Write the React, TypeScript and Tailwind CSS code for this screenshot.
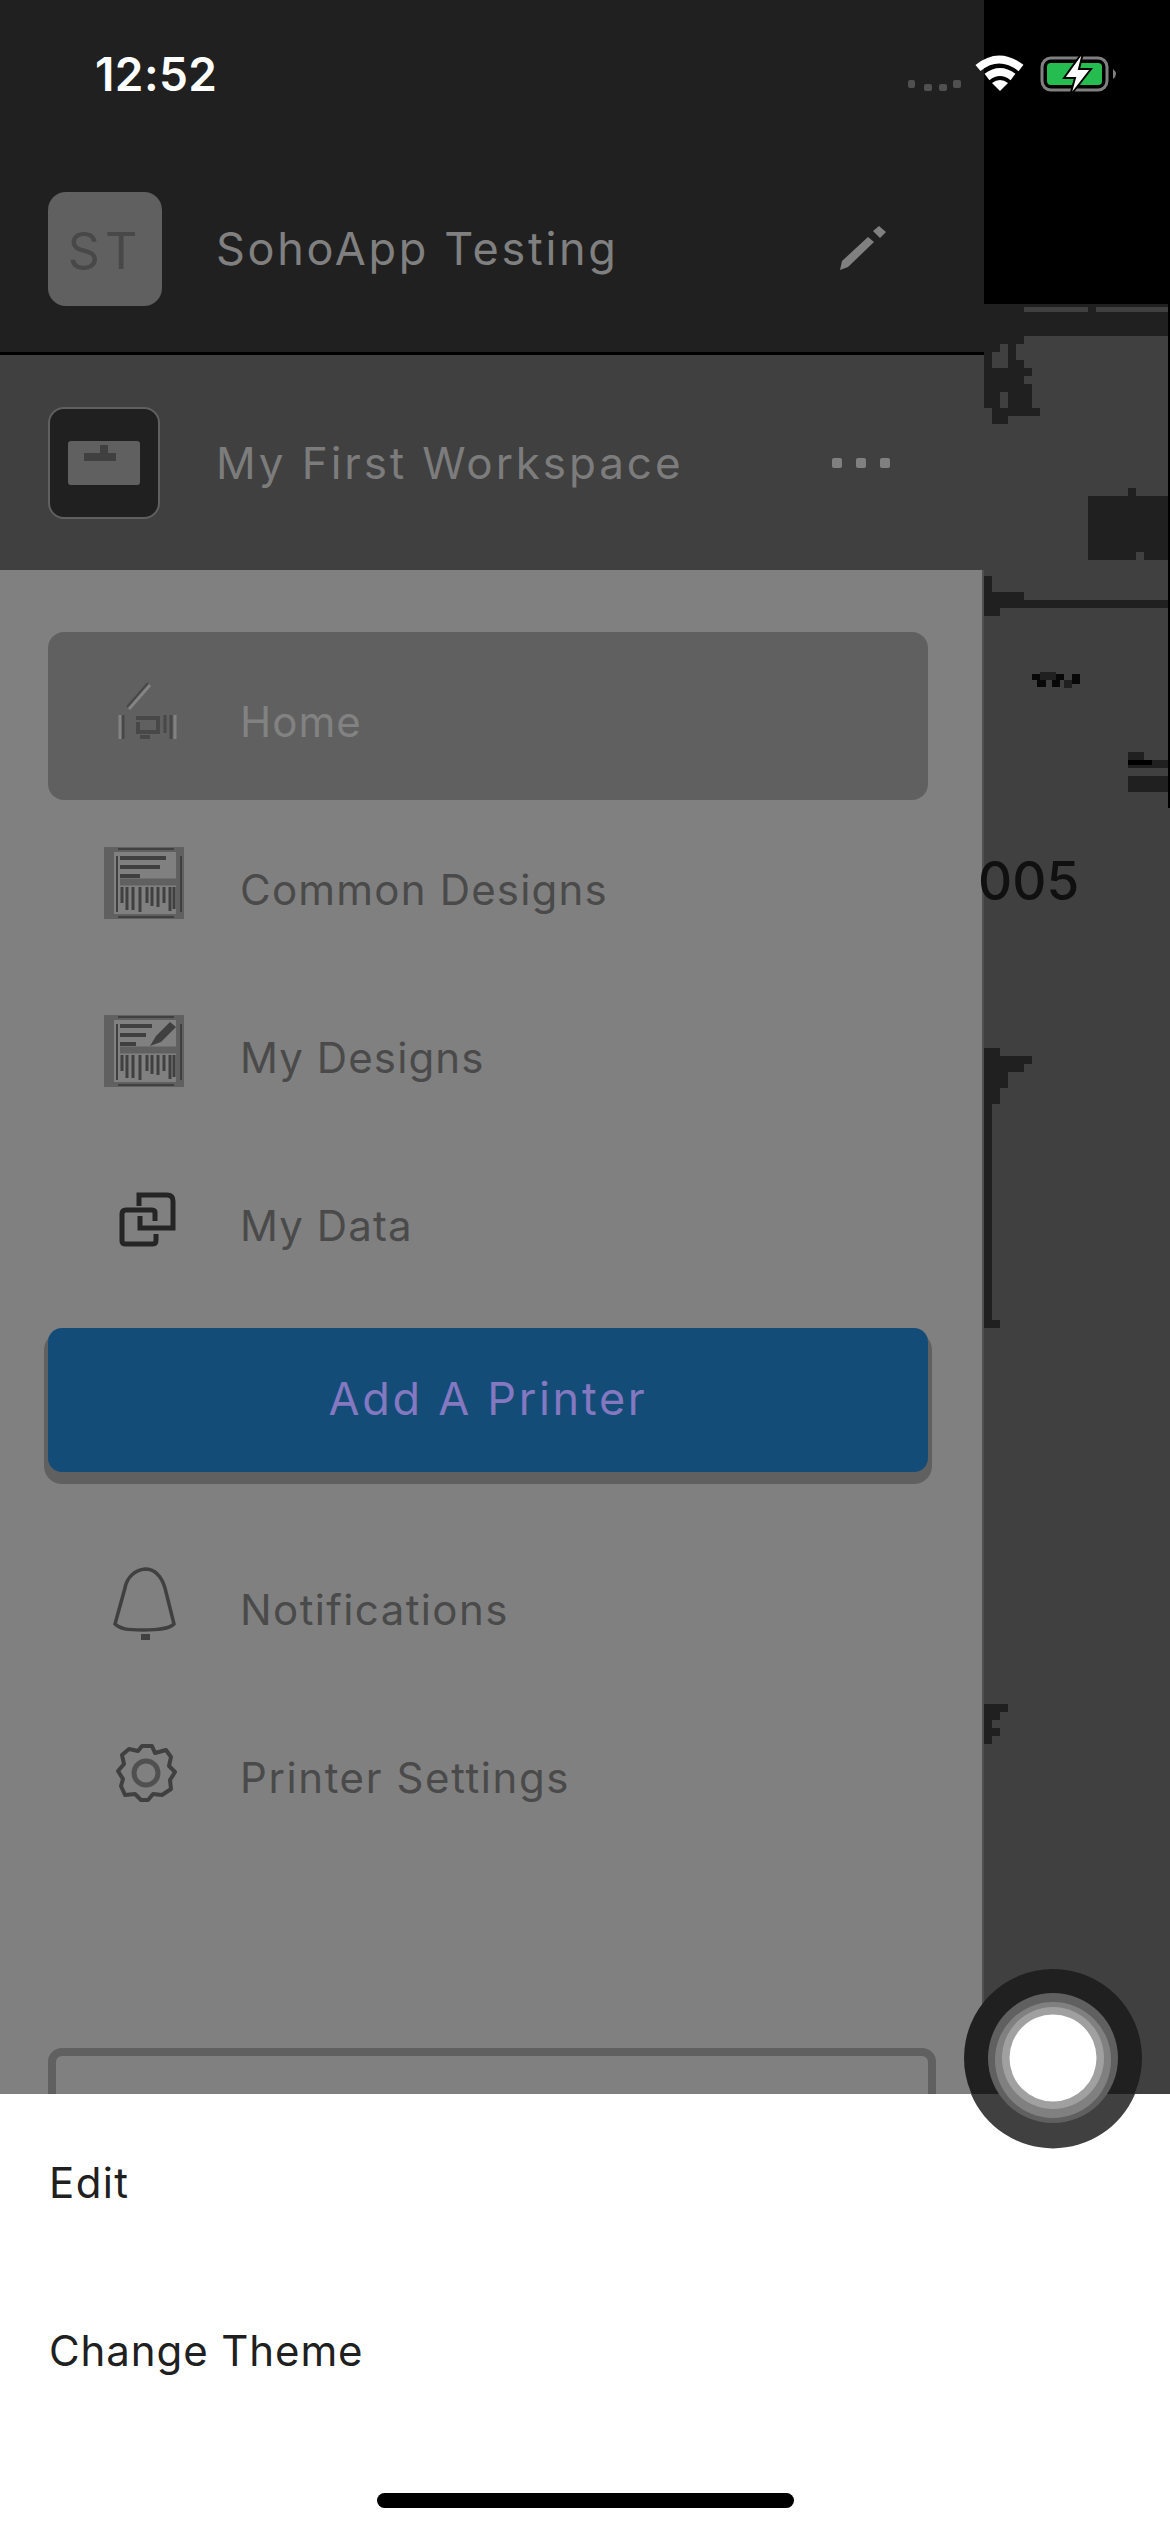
import React from "react";

function HomeIcon() {
  return (
    <svg className="h-20 w-20" viewBox="0 0 80 80" fill="none" stroke="#484848" strokeWidth="3">
      <path d="M25 33 L46 9" stroke="#848484" strokeWidth="3" />
      <path d="M23 31 L44 7" strokeWidth="2" />
      <path d="M19 39v24M67 39v24M61 39v18" />
      <path d="M32 42h22v14H34V46M36 61h10" strokeWidth="4" />
      <path d="M16 39v24M71 39v24" stroke="#828282" />
    </svg>
  );
}

function LabelIcon({ edit }: { edit?: boolean }) {
  return (
    <svg className="h-20 w-20" viewBox="0 0 80 80" fill="none">
      <rect y="3" width="80" height="72" fill="#606060" />
      <rect x="10" y="8" width="62" height="62" fill="#808080" />
      <path d="M14 5h56M14 73h56M13 12v56M77 12v56" stroke="#404040" strokeWidth="2" />
      <path d={edit ? "M16 14h32M16 23h26M16 32h16" : "M16 14h46M16 23h40M16 32h20"} stroke="#404040" strokeWidth="4" />
      <path d="M16 38h56" stroke="#606060" strokeWidth="7" />
      <path d="M18 43v16M23 43v23M29 43v23M36 43v25M43 43v16M48 43v19M54 43v20M60 43v16M66 43v24M70 43v22" stroke="#404040" strokeWidth="3" />
      {edit && <path d="M46 34l6-10 14-14 6 5-15 15z" fill="#404040" />}
    </svg>
  );
}

function LinkIcon() {
  return (
    <svg className="h-20 w-20" viewBox="0 0 80 80" fill="none" stroke="#252525" strokeWidth="5">
      <path d="M35 26V15h28q6 0 6 6v27H36V36" />
      <path d="M51 41V32q0-2-4-2H22q-4 0-4 4v27q0 3 4 3h27q3 0 3-4v-6" />
    </svg>
  );
}

function BellIcon() {
  return (
    <svg className="h-20 w-20" viewBox="0 0 80 80" fill="none" stroke="#404040" strokeWidth="3.5">
      <path d="M41 5c-10 1-18 8-20 19L11 60c5 5 12 6 28 6s26-1 31-6L61 24C57 11 51 5 41 5z" />
      <path d="M37 73h9" strokeWidth="6" />
    </svg>
  );
}

function GearIcon() {
  return (
    <svg className="h-20 w-20" viewBox="0 0 80 80" fill="none" stroke="#404040" strokeWidth="4">
      <path d="M38 14h10l3 7 11-3 5 7-2 9 6 6-5 8 1 9-9 6-9-1-5 6H37l-6-6-10 1-4-9 2-7-5-8 6-7-2-9 7-6 9 2z" strokeLinejoin="round" />
      <circle cx="42" cy="41" r="12" stroke="#505050" strokeWidth="5" />
    </svg>
  );
}

function MenuRow({ icon, label, active, fit }: { icon: React.ReactNode; label: string; active?: boolean; fit: string }) {
  return (
    <div className={`flex h-[168px] w-[880px] items-center pl-14 ${active ? "rounded-[16px] bg-[#606060] text-[#828282]" : "text-[#4a4a4a]"}`}>
      {icon}
      <span className={`ml-14 pt-3 text-[42px] leading-[56px] whitespace-nowrap ${fit}`}>{label}</span>
    </div>
  );
}

function StatusIcons() {
  return (
    <svg className="absolute top-[48px] left-[896px] h-[52px] w-[232px]" viewBox="0 0 232 52" fill="none">
      <g fill="#505050">
        <rect x="12" y="32" width="7" height="8" rx="2" />
        <rect x="28" y="36" width="8" height="7" rx="2" />
        <rect x="43" y="36" width="8" height="7" rx="2" />
        <rect x="57" y="32" width="8" height="8" rx="2" />
      </g>
      <g stroke="#fff" strokeWidth="8">
        <path d="M82 20q21-17 43 0" />
        <path d="M91 29q13-10 26 0" />
      </g>
      <path d="M104 43l-8-8q8-6 16 0z" fill="#fff" />
      <rect x="146" y="10" width="65" height="32" rx="9" stroke="#808080" strokeWidth="3" />
      <rect x="151" y="15" width="55" height="22" rx="4" fill="#26bd50" />
      <path d="M217 21q6 5 0 10z" fill="#808080" />
      <path d="M186 5l-18 25h11l-5 18 21-27h-12l4-16z" fill="#fff" stroke="#000" strokeWidth="2" />
    </svg>
  );
}

function CoveredPage() {
  return (
    <div className="relative h-full flex-1 bg-[#404040]">
      <div className="h-[304px] bg-black" />
      <div className="h-8 bg-[#202020]" />
      <svg className="absolute top-[304px] left-0 h-[1460px] w-[186px]" viewBox="0 0 186 1460" fill="#202020" shapeRendering="crispEdges">
        <path d="M40 3h64v5H40zM112 3h72v5h-72z" fill="#404040" />
        <path d="M0 32h40v8h-8v16h8v8h8v8h-8v8h8v24h8v8H24v8H8v-16H0z" />
        <path d="M16 40h8v8h-8zM8 48h16v16H8zM16 88h8v16h-8z" fill="#404040" />
        <path d="M104 192h40v-8h8v8h32v64h-24v-8h-8v8h-48z" />
        <path d="M0 272h8v16h32v8h144v8H16v8H0z" />
        <path d="M48 370h32v6h-4v7h-8v-7h-6v7h-9v-7h-5zM88 370h8v10h-8z" fill="#080808" />
        <path d="M56 368h16v8H56zM80 376h8v8h-8z" />
        <path d="M144 448h16v8h24v8h-40zM144 472h40v16h-40z" />
        <path d="M144 456h24v5h-24z" fill="#000" />
        <path d="M0 744h16v8h32v8h-8v8H24v16h-8v16H8v216h8v8H0z" />
        <path d="M0 1400h24v8h-8v8H8v8h8v8H8v8H0z" />
        <path d="M184 0h2v504h-2z" fill="#000" />
      </svg>
      <span className="absolute top-[849px] -left-[6px] text-[53px] leading-[64px] font-medium text-[#101010]">005</span>
    </div>
  );
}

export default function App() {
  return (
    <main className="relative flex h-[2532px] w-[1170px] flex-col overflow-hidden bg-white font-['Inter',sans-serif]">
      <div className="flex h-[2094px] shrink-0">
        <aside className="flex h-full w-[984px] shrink-0 flex-col overflow-hidden bg-[#808080]">
          <header className="flex h-[355px] shrink-0 flex-col border-b-[3px] border-black bg-[#202020]">
            <time className="mt-[46px] ml-[95px] h-[56px] text-[46px] leading-[56px] font-semibold tracking-[0.4px] text-white">12:52</time>
            <div className="mt-[90px] flex h-[114px] items-center pl-12">
              <div className="flex size-[114px] items-center justify-center rounded-[18px] bg-[#606060] pt-1 text-[50px] tracking-[5px] text-[#484848]">ST</div>
              <h1 className="ml-[54px] w-[600px] text-[45px] leading-[56px] tracking-[2.7px] text-[#808080]">SohoApp Testing</h1>
              <svg className="ml-[22px] h-14 w-14" viewBox="0 0 56 56" fill="#808080">
                <path d="M2 49l2-9 26-24 6 5-26 25zM35 10l6-5 7 6-6 6z" />
              </svg>
            </div>
          </header>
          <section className="flex h-[215px] shrink-0 items-center bg-[#404040] pl-12">
            <div className="flex size-[112px] items-center justify-center rounded-[16px] border-2 border-[#606060] bg-[#202020]">
              <svg className="h-[44px] w-[72px]" viewBox="0 0 72 44">
                <rect width="72" height="44" rx="3" fill="#606060" />
                <path d="M32 4h8v8h8v8H16v-8h16z" fill="#404040" />
              </svg>
            </div>
            <h2 className="ml-[56px] w-[600px] text-[44px] leading-[56px] tracking-[2.9px] text-[#7c7c7c]">My First Workspace</h2>
            <div className="ml-[16px] flex gap-3.5">
              <i className="size-2.5 rounded-xs bg-[#808080]" />
              <i className="size-2.5 rounded-xs bg-[#808080]" />
              <i className="size-2.5 rounded-xs bg-[#808080]" />
            </div>
          </section>
          <nav className="flex flex-1 flex-col border-r-2 border-[#505050] pt-[62px] pl-12">
            <MenuRow icon={<HomeIcon />} label="Home" active fit="tracking-[1px]" />
            <MenuRow icon={<LabelIcon />} label="Common Designs" fit="tracking-[1.2px]" />
            <MenuRow icon={<LabelIcon edit />} label="My Designs" fit="tracking-[1.1px]" />
            <MenuRow icon={<LinkIcon />} label="My Data" fit="tracking-[1.1px]" />
            <button className="mt-6 mb-12 h-[144px] w-[880px] shrink-0 rounded-[14px] bg-[#144c78] pb-0.5 text-[45px] tracking-[2.7px] text-[#8478c0] shadow-[0_8px_0_4px_#606060]">Add A Printer</button>
            <MenuRow icon={<BellIcon />} label="Notifications" fit="tracking-[1.4px]" />
            <MenuRow icon={<GearIcon />} label="Printer Settings" fit="tracking-[1.6px]" />
            <div className="mt-48 h-24 w-[888px] shrink-0 -mb-24 rounded-[14px] border-8 border-[#606060]" />
          </nav>
        </aside>
        <CoveredPage />
      </div>
      <section className="relative flex flex-1 flex-col bg-white pl-[49px] text-[42px] leading-[168px] tracking-[0.9px] text-[#202020]">
        <span className="mt-[5px] h-[168px] tracking-[1.4px]">Edit</span>
        <span className="h-[168px]">Change Theme</span>
        <div className="mt-[58px] ml-[328px] h-[15px] w-[417px] rounded-full bg-black" />
      </section>
      <StatusIcons />
      <svg className="absolute top-[1967px] left-[962px] size-[182px]" viewBox="0 0 182 182">
        <circle cx="91" cy="91" r="89" fill="#202020" />
        <path d="M9 127h164A89 89 0 0 1 9 127z" fill="#404040" />
        <circle cx="91" cy="91" r="65" fill="#606060" />
        <circle cx="91" cy="93" r="58" fill="#808080" />
        <circle cx="91" cy="91" r="51" fill="#a0a0a0" />
        <circle cx="91" cy="91" r="43.5" fill="#fff" />
      </svg>
    </main>
  );
}
